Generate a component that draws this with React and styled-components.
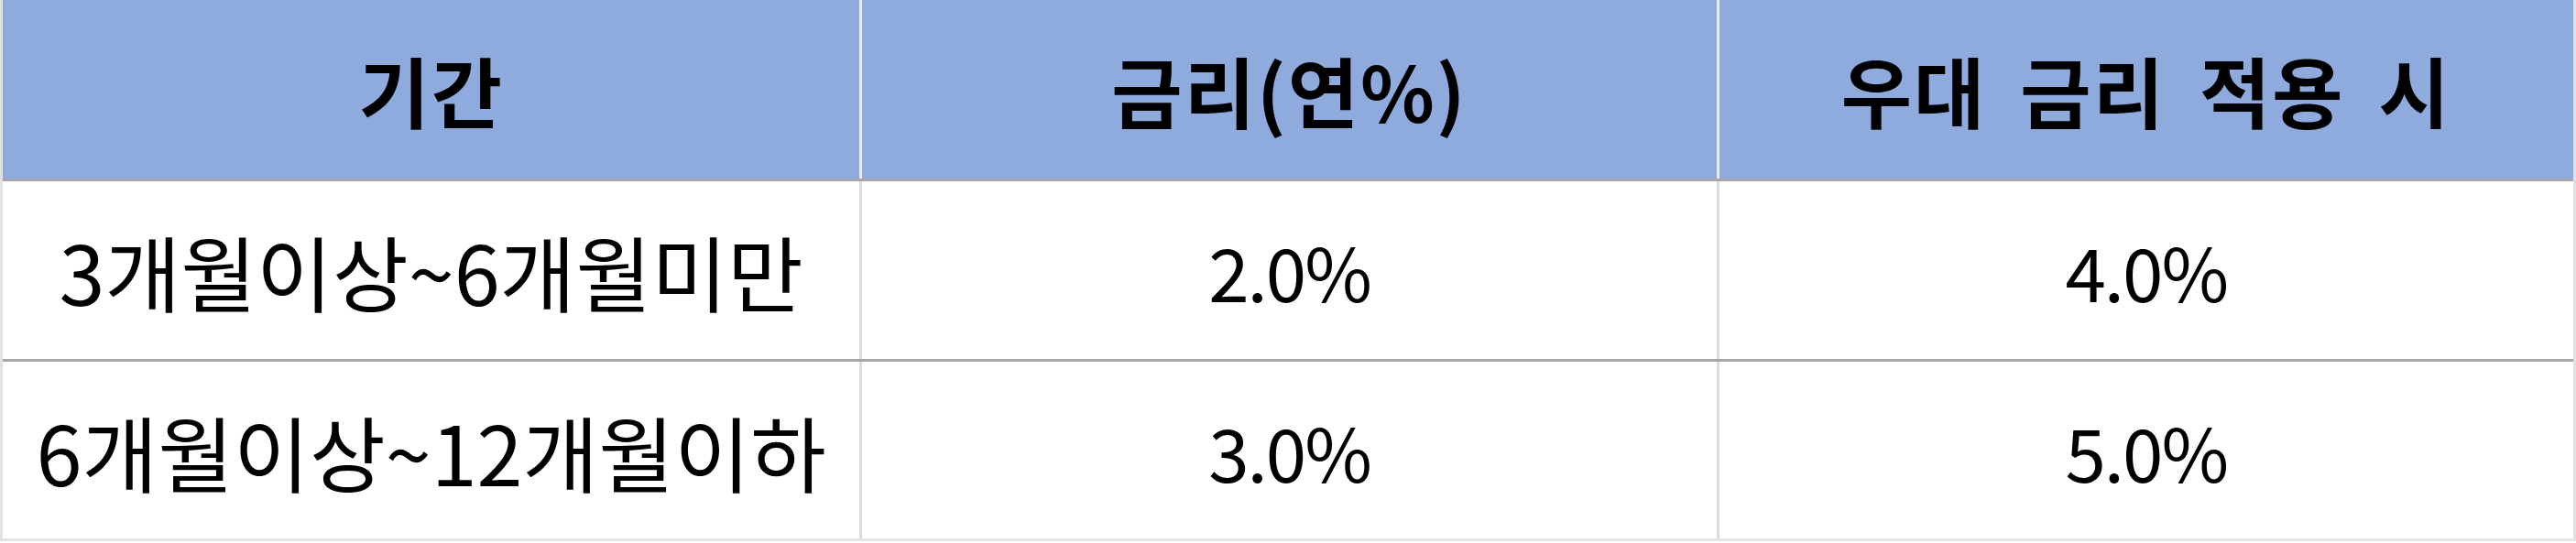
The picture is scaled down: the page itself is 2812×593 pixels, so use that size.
import styled, { createGlobalStyle } from "styled-components";

const GlobalStyle = createGlobalStyle`
  html, body {
    margin: 0;
    padding: 0;
    background: #ffffff;
  }
  body {
    font-family: "Noto Sans CJK KR", "Noto Sans", sans-serif;
    color: #000000;
  }
`;

const Table = styled.div`
  width: 2812px;
  height: 591px;
  box-sizing: border-box;
  border-left: 3px solid #e2e2e2;
  border-right: 3px solid #e2e2e2;
  border-bottom: 3px solid #e2e2e2;
  display: flex;
  flex-direction: column;
`;

const Row = styled.div`
  display: grid;
  grid-template-columns: repeat(3, 1fr);
  height: ${(p) => p.$height}px;
  box-sizing: border-box;
  background: ${(p) => (p.$head ? "#8faadc" : "#ffffff")};
  border-bottom: ${(p) => (p.$last ? "none" : "3px solid #a6a6a6")};
`;

const Cell = styled.div`
  display: flex;
  align-items: center;
  justify-content: center;
  white-space: nowrap;
  line-height: 1;
  & + & {
    border-left: 3px solid #dcdcdc;
  }
`;

const HeadCell = styled(Cell)`
  font-size: 84px;
  font-weight: 700;
  letter-spacing: 2px;
  word-spacing: 16px;
  & + & {
    border-left-color: #e6ebf5;
  }
`;

const TermCell = styled(Cell)`
  font-size: 90px;
  letter-spacing: 0;
`;

const RateCell = styled(Cell)`
  font-size: 80px;
  letter-spacing: -2px;
`;

const header = ["기간", "금리(연%)", "우대 금리 적용 시"];

const rows = [
  { term: "3개월이상~6개월미만", rate: "2.0%", bonus: "4.0%" },
  { term: "6개월이상~12개월이하", rate: "3.0%", bonus: "5.0%" },
];

export default function App() {
  return (
    <>
      <GlobalStyle />
      <Table>
        <Row $head $height={198}>
          {header.map((h) => (
            <HeadCell key={h}>{h}</HeadCell>
          ))}
        </Row>
        {rows.map((r, i) => {
          const last = i === rows.length - 1;
          return (
            <Row key={r.term} $height={last ? 193 : 197} $last={last}>
              <TermCell>{r.term}</TermCell>
              <RateCell>{r.rate}</RateCell>
              <RateCell>{r.bonus}</RateCell>
            </Row>
          );
        })}
      </Table>
    </>
  );
}
